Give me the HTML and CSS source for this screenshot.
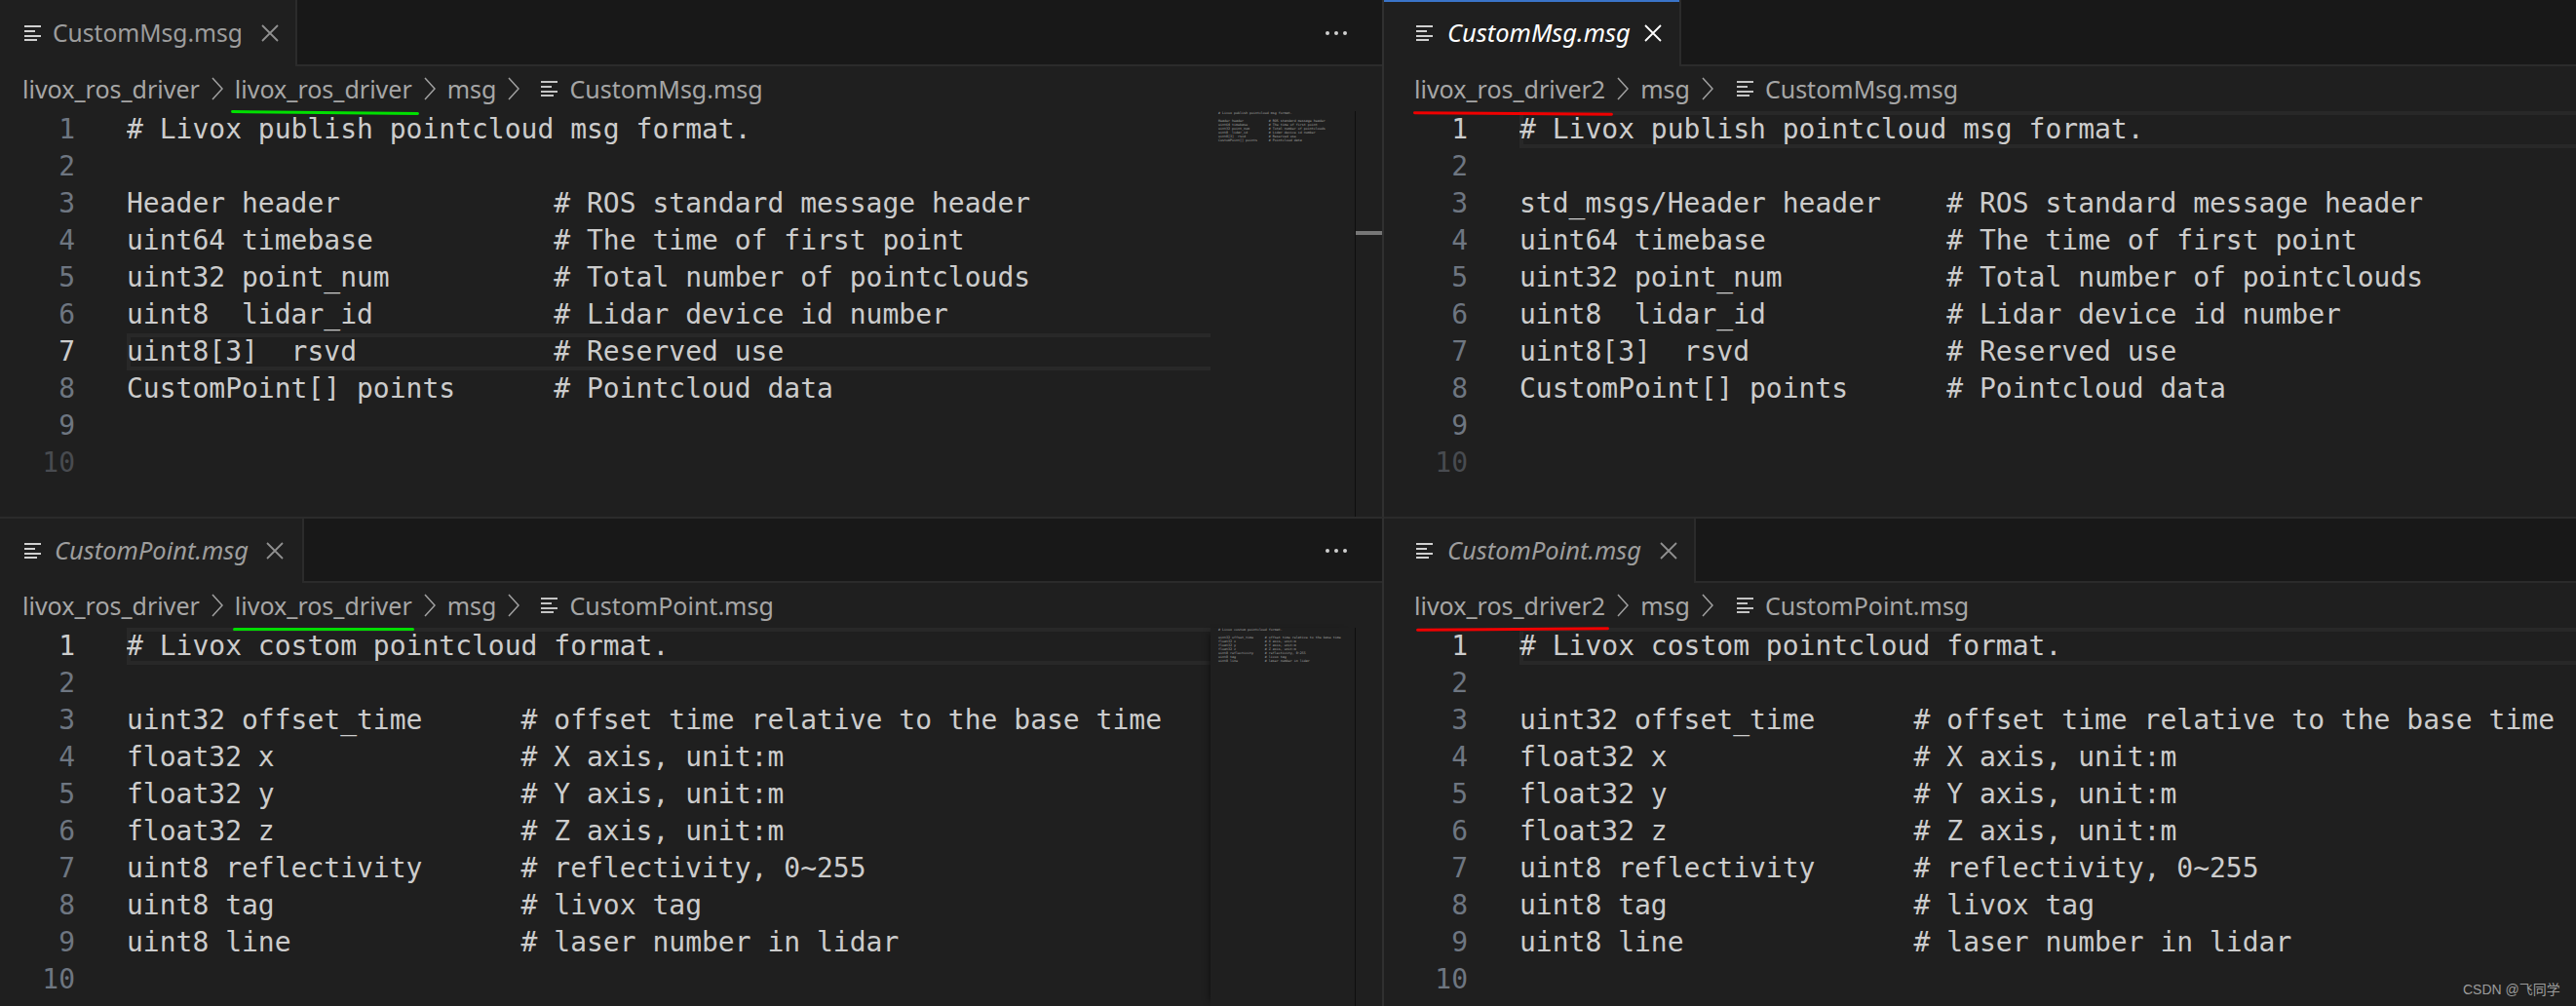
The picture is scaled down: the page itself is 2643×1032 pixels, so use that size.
FILE: index.html
```html
<!DOCTYPE html>
<html lang="en">
<head>
<meta charset="utf-8">
<title>CustomMsg and CustomPoint comparison</title>
<link rel="stylesheet" href="styles.css">
</head>
<body>
<svg class="defs" width="0" height="0" aria-hidden="true">
  <symbol id="i-list" viewBox="0 0 17 16"><path d="M0 1h17M0 6h11M0 11h17M0 15h13" fill="none" stroke="currentColor" stroke-width="2"/></symbol>
  <symbol id="i-close" viewBox="0 0 18 18"><path d="M1 1l16 16M17 1L1 17" fill="none" stroke="currentColor" stroke-width="1.800"/></symbol>
  <symbol id="i-chev" viewBox="0 0 12 24"><path d="M1 1l10 11L1 23" fill="none" stroke="currentColor" stroke-width="1.500"/></symbol>
</svg>
<main class="grid">

  <section class="pane pane-left">
    <header class="tabbar">
      <div class="tab tab-a"><svg class="ico"><use href="#i-list"/></svg><span class="tabname">CustomMsg.msg</span><svg class="close"><use href="#i-close"/></svg></div>
      <div class="more"><i></i><i></i><i></i></div>
    </header>
    <nav class="crumbs">
      <span class="crumb">livox_ros_driver</span><svg class="chev"><use href="#i-chev"/></svg>
      <span class="crumb mark-green">livox_ros_driver</span><svg class="chev"><use href="#i-chev"/></svg>
      <span class="crumb">msg</span><svg class="chev"><use href="#i-chev"/></svg>
      <svg class="ico ico-crumb"><use href="#i-list"/></svg><span class="crumb">CustomMsg.msg</span>
    </nav>
    <div class="editor">
      <ol class="gutter">
        <li>1</li><li>2</li><li>3</li><li>4</li><li>5</li><li>6</li><li class="on">7</li><li>8</li><li>9</li><li class="dim">10</li>
      </ol>
      <div class="code">
        <div class="line"># Livox publish pointcloud msg format.</div>
        <div class="line"> </div>
        <div class="line">Header header             # ROS standard message header</div>
        <div class="line">uint64 timebase           # The time of first point</div>
        <div class="line">uint32 point_num          # Total number of pointclouds</div>
        <div class="line">uint8  lidar_id           # Lidar device id number</div>
        <div class="line current">uint8[3]  rsvd            # Reserved use</div>
        <div class="line">CustomPoint[] points      # Pointcloud data</div>
      </div>
      <div class="minimap" aria-hidden="true">
        <div># Livox publish pointcloud msg format.</div>
        <div> </div>
        <div>Header header             # ROS standard message header</div>
        <div>uint64 timebase           # The time of first point</div>
        <div>uint32 point_num          # Total number of pointclouds</div>
        <div>uint8  lidar_id           # Lidar device id number</div>
        <div>uint8[3]  rsvd            # Reserved use</div>
        <div>CustomPoint[] points      # Pointcloud data</div>
      </div>
      <div class="scroll"><div class="thumb"></div></div>
    </div>
  </section>

  <section class="pane pane-right">
    <header class="tabbar">
      <div class="tab tab-b active"><svg class="ico"><use href="#i-list"/></svg><span class="tabname">CustomMsg.msg</span><svg class="close"><use href="#i-close"/></svg></div>
    </header>
    <nav class="crumbs">
      <span class="crumb mark-red">livox_ros_driver2</span><svg class="chev"><use href="#i-chev"/></svg>
      <span class="crumb">msg</span><svg class="chev"><use href="#i-chev"/></svg>
      <svg class="ico ico-crumb"><use href="#i-list"/></svg><span class="crumb">CustomMsg.msg</span>
    </nav>
    <div class="editor">
      <ol class="gutter">
        <li class="on">1</li><li>2</li><li>3</li><li>4</li><li>5</li><li>6</li><li>7</li><li>8</li><li>9</li><li class="dim">10</li>
      </ol>
      <div class="code">
        <div class="line current"># Livox publish pointcloud msg format.</div>
        <div class="line"> </div>
        <div class="line">std_msgs/Header header    # ROS standard message header</div>
        <div class="line">uint64 timebase           # The time of first point</div>
        <div class="line">uint32 point_num          # Total number of pointclouds</div>
        <div class="line">uint8  lidar_id           # Lidar device id number</div>
        <div class="line">uint8[3]  rsvd            # Reserved use</div>
        <div class="line">CustomPoint[] points      # Pointcloud data</div>
      </div>
    </div>
  </section>

  <section class="pane pane-left pane-low">
    <header class="tabbar">
      <div class="tab tab-c preview"><svg class="ico"><use href="#i-list"/></svg><span class="tabname">CustomPoint.msg</span><svg class="close"><use href="#i-close"/></svg></div>
      <div class="more"><i></i><i></i><i></i></div>
    </header>
    <nav class="crumbs">
      <span class="crumb">livox_ros_driver</span><svg class="chev"><use href="#i-chev"/></svg>
      <span class="crumb mark-green low">livox_ros_driver</span><svg class="chev"><use href="#i-chev"/></svg>
      <span class="crumb">msg</span><svg class="chev"><use href="#i-chev"/></svg>
      <svg class="ico ico-crumb"><use href="#i-list"/></svg><span class="crumb">CustomPoint.msg</span>
    </nav>
    <div class="editor">
      <ol class="gutter">
        <li class="on">1</li><li>2</li><li>3</li><li>4</li><li>5</li><li>6</li><li>7</li><li>8</li><li>9</li><li>10</li>
      </ol>
      <div class="code">
        <div class="line current"># Livox costom pointcloud format.</div>
        <div class="line"> </div>
        <div class="line">uint32 offset_time      # offset time relative to the base time</div>
        <div class="line">float32 x               # X axis, unit:m</div>
        <div class="line">float32 y               # Y axis, unit:m</div>
        <div class="line">float32 z               # Z axis, unit:m</div>
        <div class="line">uint8 reflectivity      # reflectivity, 0~255</div>
        <div class="line">uint8 tag               # livox tag</div>
        <div class="line">uint8 line              # laser number in lidar</div>
      </div>
      <div class="minimap shadowed" aria-hidden="true">
        <div># Livox costom pointcloud format.</div>
        <div> </div>
        <div>uint32 offset_time      # offset time relative to the base time</div>
        <div>float32 x               # X axis, unit:m</div>
        <div>float32 y               # Y axis, unit:m</div>
        <div>float32 z               # Z axis, unit:m</div>
        <div>uint8 reflectivity      # reflectivity, 0~255</div>
        <div>uint8 tag               # livox tag</div>
        <div>uint8 line              # laser number in lidar</div>
      </div>
      <div class="scroll"></div>
    </div>
  </section>

  <section class="pane pane-right pane-low">
    <header class="tabbar">
      <div class="tab tab-d preview"><svg class="ico"><use href="#i-list"/></svg><span class="tabname">CustomPoint.msg</span><svg class="close"><use href="#i-close"/></svg></div>
    </header>
    <nav class="crumbs">
      <span class="crumb mark-red low">livox_ros_driver2</span><svg class="chev"><use href="#i-chev"/></svg>
      <span class="crumb">msg</span><svg class="chev"><use href="#i-chev"/></svg>
      <svg class="ico ico-crumb"><use href="#i-list"/></svg><span class="crumb">CustomPoint.msg</span>
    </nav>
    <div class="editor">
      <ol class="gutter">
        <li class="on">1</li><li>2</li><li>3</li><li>4</li><li>5</li><li>6</li><li>7</li><li>8</li><li>9</li><li>10</li>
      </ol>
      <div class="code">
        <div class="line current"># Livox costom pointcloud format.</div>
        <div class="line"> </div>
        <div class="line">uint32 offset_time      # offset time relative to the base time</div>
        <div class="line">float32 x               # X axis, unit:m</div>
        <div class="line">float32 y               # Y axis, unit:m</div>
        <div class="line">float32 z               # Z axis, unit:m</div>
        <div class="line">uint8 reflectivity      # reflectivity, 0~255</div>
        <div class="line">uint8 tag               # livox tag</div>
        <div class="line">uint8 line              # laser number in lidar</div>
      </div>
    </div>
  </section>

</main>
<div class="watermark">CSDN @飞同学</div>
</body>
</html>
```
FILE: styles.css
```css
* { box-sizing: border-box; }
html, body { margin: 0; padding: 0; height: 100%; background: #1f1f1f; overflow: hidden; }
.defs { position: absolute; }
.grid {
  display: grid;
  grid-template-columns: 1420px 1223px;
  grid-template-rows: 530px 502px;
  width: 2643px;
  height: 1032px;
}
.pane { display: flex; flex-direction: column; min-width: 0; min-height: 0; overflow: hidden; background: #1f1f1f; }
.pane-left { border-right: 2px solid #303030; }
.pane-low { border-top: 2px solid #2b2b2b; }

.tabbar {
  display: flex;
  justify-content: space-between;
  align-items: stretch;
  flex: none;
  height: 68px;
  background: #181818;
  box-shadow: inset 0 -2px 0 #2b2b2b;
  font: 24.6px/1 "Noto Sans", "Open Sans", sans-serif;
}
.pane-low .tabbar { height: 66px; }
.tab {
  display: flex;
  align-items: center;
  background: #1f1f1f;
  border-right: 2px solid #2b2b2b;
  color: #9d9d9d;
}
.tab-a { width: 305px; padding-left: 25px; }
.tab-b { width: 305px; padding-left: 33px; }
.tab-c { width: 312px; padding-left: 25px; }
.tab-d { width: 320px; padding-left: 33px; }
.tab.active { color: #ffffff; box-shadow: inset 0 2px 0 #3a74c9; }
.tab.active .close { color: #ffffff; }
.tab.active, .tab.preview { font-style: italic; font-size: 25.5px; }
.ico { flex: none; width: 17px; height: 16px; color: #d0d0d0; }
.tabname { margin-left: 12px; flex: none; width: 196px; white-space: nowrap; }
.tab-b .tabname { margin-left: 15px; width: 184px; }
.tab-c .tabname { margin-left: 14px; width: 199px; }
.tab-d .tabname { margin-left: 15px; width: 200px; }
.close { flex: none; width: 18px; height: 18px; margin-left: 18px; color: #909090; }

.more { display: flex; align-items: center; gap: 5px; padding-right: 36px; }
.more i { display: block; width: 4px; height: 4px; border-radius: 50%; background: #cfcfcf; }

.crumbs {
  display: flex;
  align-items: center;
  flex: none;
  height: 46px;
  padding-left: 23px;
  font: 25px/1 "Noto Sans", "Open Sans", sans-serif;
  color: #a6a6a6;
  white-space: nowrap;
}
.pane-right .crumbs { padding-left: 31px; }
.crumb { position: relative; flex: none; }
.chev { flex: none; width: 12px; height: 24px; margin: 0 12px; color: #a0a0a0; }
.ico-crumb { margin: 0 12px 0 10px; color: #c4c4c4; }
.pane-right .ico-crumb { margin-left: 12px; }
.mark-green::after, .mark-red::after {
  content: "";
  position: absolute;
  height: 3px;
  border-radius: 2px;
}
.mark-green::after { left: -4px; right: -7px; bottom: -13px; background: #00e000; transform: rotate(.6deg); }
.mark-green.low::after { left: -2px; right: -2px; bottom: -13px; background: #00dc00; transform: none; }
.mark-red::after { left: -1px; right: -8px; bottom: -14px; background: #f00000; transform: rotate(.4deg); }
.mark-red.low::after { left: 2px; right: -4px; bottom: -13px; transform: rotate(-.5deg); }

.editor { display: flex; flex: 1; min-height: 0; font-family: "DejaVu Sans Mono", monospace; }
.gutter {
  flex: none;
  width: 130px;
  margin: 0;
  padding: 0 53px 0 0;
  list-style: none;
  text-align: right;
  font-size: 28px;
  line-height: 38px;
  color: #6e7681;
}
.pane-right .gutter { width: 139px; }
.gutter .on { color: #cccccc; }
.gutter .dim { color: #484b50; }
.code { flex: 1; min-width: 0; overflow: hidden; font-size: 28px; line-height: 38px; color: #cccccc; }
.line { height: 38px; white-space: pre; }
.current { margin-right: -4px; box-shadow: inset 0 0 0 4px #282828; }

.minimap {
  flex: none;
  width: 148px;
  padding-left: 8px;
  overflow: hidden;
  font-size: 3.32px;
  line-height: 4px;
  color: #a8a8a8;
}
.minimap div { height: 4px; white-space: pre; }
.shadowed { box-shadow: -6px 0 6px -5px #111; position: relative; }
.scroll {
  flex: none;
  width: 28px;
  border-left: 1px solid #0e0e0e;
  padding-top: 123px;
}
.thumb { height: 4px; background: #777777; }

.watermark {
  position: absolute;
  left: 2527px;
  top: 1007px;
  font: 14px/16px "Liberation Sans", "Noto Sans CJK SC", sans-serif;
  color: #9c9c9c;
}
```
